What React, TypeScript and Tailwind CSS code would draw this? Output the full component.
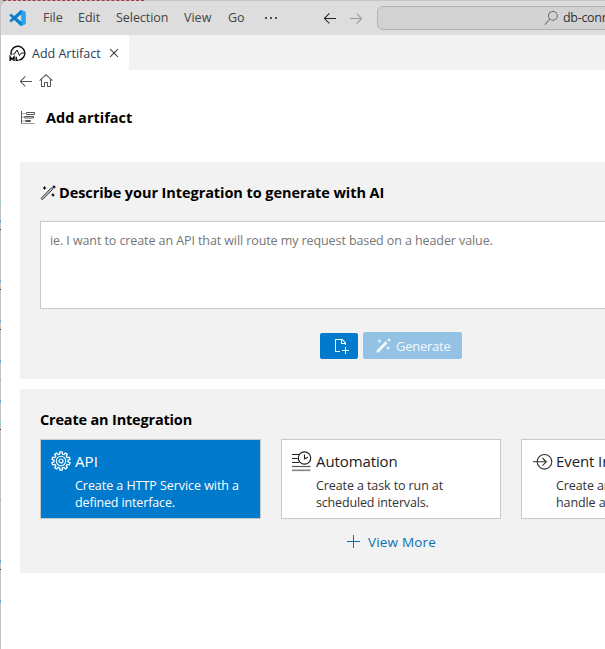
import React from "react";
import {
  VscArrowLeft,
  VscArrowRight,
  VscHome,
  VscSearch,
  VscEllipsis,
  VscClose,
  VscNewFile,
  VscAdd,
} from "react-icons/vsc";

function VsCodeLogo() {
  return (
    <svg className="shrink-0" width="17" height="16" viewBox="0 0 24 24">
      <path
        fill="#0b7fcf"
        d="M23.15 2.587L18.21.21a1.494 1.494 0 0 0-1.705.29l-9.46 8.63-4.12-3.128a.999.999 0 0 0-1.276.057L.327 7.261A1 1 0 0 0 .326 8.74L3.899 12 .326 15.26a1 1 0 0 0 .001 1.479L1.65 17.94a.999.999 0 0 0 1.276.057l4.12-3.128 9.46 8.63a1.492 1.492 0 0 0 1.704.29l4.942-2.377A1.5 1.5 0 0 0 24 20.06V3.939a1.5 1.5 0 0 0-.85-1.352zm-5.146 14.861L10.826 12l7.178-5.448v10.896z"
      />
      <path
        fill="#27a5f2"
        d="M18.21.21l4.94 2.377A1.5 1.5 0 0 1 24 3.939V20.06a1.5 1.5 0 0 1-.85 1.352L18.21 23.79a1.49 1.49 0 0 1-1.2.05c.6.1 1-.5 1-1.1V1.3c0-.6-.4-1.2-1-1.14a1.49 1.49 0 0 1 1.2.05z"
      />
    </svg>
  );
}

function MiLogo() {
  return (
    <svg className="shrink-0" width="17" height="17" viewBox="0 0 17 17" fill="none" stroke="#111">
      <path d="M2.3 10.200A6.900 6.900 0 1 1 10.200 15" strokeWidth="1.400" />
      <path d="M3.500 9h2L8 5l2.500 5.500L12.500 8H15" strokeWidth="1" />
      <path d="M1.200 16v-4l1.900 2.400L5 12v4M7.200 11.800v3.500h2.300" strokeWidth="1.500" />
    </svg>
  );
}

function ArtifactIcon() {
  return (
    <svg width="16" height="15" viewBox="0 0 16 15" fill="none" stroke="#555" strokeWidth="1">
      <path d="M1.500 1v12.500" />
      <path d="M1.500 13.500h13" stroke="#999" />
      <path d="M6.500 2.500h8v2h-8z" />
      <path d="M4.500 6.500h9v1.500h-9z" />
      <path d="M5.500 10.500h5v1h-5z" />
      <path d="M2 3.500h4.500M2 7.200h2.500M2 11h3.500" stroke="#aaa" />
    </svg>
  );
}

function Wand({ solid = false }: { solid?: boolean }) {
  return (
    <svg width="16" height="16" viewBox="0 0 16 16" fill="none" stroke="currentColor">
      {solid ? (
        <path d="M2.800 13.200L10.800 5" strokeWidth="2.800" strokeLinecap="round" />
      ) : (
        <path
          d="M1.600 12.700L10.800 3.300a1 1 0 0 1 1.500 1.400L3 14.200a1 1 0 0 1-1.400-1.500z"
          fill="#bbb"
          stroke="#444"
          strokeWidth="1"
        />
      )}
      <path
        fill="currentColor"
        stroke="none"
        d="M4.500 1l.7 1.300 1.300.7-1.300.7L4.500 5l-.7-1.300L2.500 3l1.300-.7zM14 0l.7 1.300 1.300.7-1.300.7L14 4l-.7-1.300L12 2l1.300-.7zM13 8l.7 1.300 1.300.7-1.300.7L13 12l-.7-1.300L11 10l1.300-.7z"
      />
    </svg>
  );
}

// Outline of a cog with flat teeth.
function cogPath(teeth: number, inner: number, outer: number) {
  const points: string[] = [];
  const step = (Math.PI * 2) / teeth;
  for (let i = 0; i < teeth; i++) {
    const a = i * step - Math.PI / 2;
    const corners: [number, number][] = [
      [-0.3, inner],
      [-0.2, outer],
      [0.2, outer],
      [0.3, inner],
    ];
    for (const [offset, radius] of corners) {
      const t = a + offset * step;
      points.push(`${(10 + radius * Math.cos(t)).toFixed(2)} ${(10 + radius * Math.sin(t)).toFixed(2)}`);
    }
  }
  return `M${points.join("L")}Z`;
}

function CogIcon() {
  return (
    <svg width="20" height="20" viewBox="0 0 20 20" fill="none" stroke="white" strokeLinejoin="round">
      <path d={cogPath(10, 7.1, 9.2)} strokeWidth="1.300" />
      <circle cx="10" cy="10" r="4.700" strokeWidth="1.100" />
      <circle cx="10" cy="10" r="2" strokeWidth="1.200" />
    </svg>
  );
}

function ScheduleIcon() {
  return (
    <svg className="-ml-px" width="21" height="21" viewBox="0 0 21 21" fill="none" stroke="#222">
      <path d="M1 3.500h7M1 7.500h5.500M1 11.500h7" strokeWidth="1.200" />
      <path d="M1 15.500h18.500" stroke="#555" strokeWidth="1.200" />
      <path d="M1 19.300h18.500" stroke="#888" strokeWidth="1.700" />
      <circle cx="13.500" cy="7" r="6.200" strokeWidth="1.200" />
      <path d="M13.500 3.500v4.300L17 6.300" strokeWidth="1.100" />
    </svg>
  );
}

function EventIcon() {
  return (
    <svg width="21" height="20" viewBox="0 0 21 20" fill="none" stroke="#333">
      <circle cx="12.500" cy="10.800" r="7.300" strokeWidth="1.100" />
      <path d="M1 10.800h12.500M10.500 7l3.800 3.800-3.800 3.800" strokeWidth="1.100" />
    </svg>
  );
}

type CardProps = {
  icon: React.ReactNode;
  title: string;
  titleClass?: string;
  lines: { text: string; className: string }[];
  active?: boolean;
};

function Card({ icon, title, titleClass = "", lines, active }: CardProps) {
  return (
    <div
      className={`h-20 shrink-0 border border-[#c8c8c8] pt-[10px] pl-[10px] whitespace-nowrap ${
        active ? "w-[221px] bg-[#007acc] text-white" : "w-[220px] bg-white text-[#1c1c1c]"
      }`}
    >
      <div className="flex h-[22px] items-center">
        <span className="w-6 shrink-0">{icon}</span>
        <span className={`text-[15px] leading-[22px] ${titleClass}`}>{title}</span>
      </div>
      <div className={`pt-[5px] pl-6 text-[12.5px] leading-[17px] ${active ? "" : "text-[#333]"}`}>
        {lines.map((l) => (
          <div key={l.text} className={l.className}>
            {l.text}
          </div>
        ))}
      </div>
    </div>
  );
}

// Slivers of the editor behind the window: top offset, height, colour.
const edgeMarks = [
  { at: "top-[119px]", look: "h-[2px] bg-[#9fc4dd]" },
  { at: "top-[200px]", look: "h-[6px] bg-[#9ccaca]" },
  { at: "top-[220px]", look: "h-[3px] bg-[#6fa5cf]" },
  { at: "top-[229px]", look: "h-px bg-[#3a2a8c]" },
  { at: "top-[280px]", look: "h-[2px] bg-[#6fa5cf]" },
  { at: "top-[289px]", look: "h-px bg-[#3a2a8c]" },
  { at: "top-[320px]", look: "h-[2px] bg-[#6fa5cf]" },
  { at: "top-[329px]", look: "h-px bg-[#3a2a8c]" },
  { at: "top-[360px]", look: "h-[3px] bg-[#6fa5cf]" },
  { at: "top-[379px]", look: "h-px bg-[#6fa5cf]" },
  { at: "top-[400px]", look: "h-[3px] bg-[#6fa5cf]" },
  { at: "top-[420px]", look: "h-[6px] bg-[#9ccaca]" },
  { at: "top-[429px]", look: "h-px bg-[#333]" },
  { at: "top-[499px]", look: "h-px bg-[#6fa5cf]" },
  { at: "top-[560px]", look: "h-[3px] bg-[#6fa5cf]" },
  { at: "top-[569px]", look: "h-px bg-[#3a2a8c]" },
  { at: "top-[600px]", look: "h-[3px] bg-[#6fa5cf]" },
];

function TitleBar() {
  return (
    <div className="flex h-[34px] shrink-0 items-center bg-[#dddddd] pl-[8px] text-[12.5px] whitespace-nowrap text-[#444]">
      <VsCodeLogo />
      <span className="ml-[17px] w-[35px] shrink-0">File</span>
      <span className="w-[38px] shrink-0">Edit</span>
      <span className="w-[68px] shrink-0 tracking-[-0.05px]">Selection</span>
      <span className="w-[44px] shrink-0">View</span>
      <span className="w-[35px] shrink-0">Go</span>
      <VscEllipsis className="size-4 shrink-0 text-[#222]" />
      <VscArrowLeft className="ml-[43px] size-4 shrink-0 text-[#222]" />
      <VscArrowRight className="ml-[10px] size-4 shrink-0 text-[#999]" />
      <div className="ml-[13px] flex h-6 w-[400px] shrink-0 items-center rounded-md border border-[#b3b3b3] bg-[#d2d2d2] pl-[166px] text-[#333]">
        <VscSearch className="size-[14px] shrink-0 text-[#666]" />
        <span className="ml-[5px] tracking-[-0.300px]">db-conn</span>
      </div>
    </div>
  );
}

export default function App() {
  return (
    <div className="relative h-[649px] w-[605px] overflow-hidden bg-[#c4c4c4] pt-px pl-px font-['Open_Sans','Noto_Sans',sans-serif]">
      <div className="absolute top-0 left-[3px] h-px w-[141px] border-t border-dashed border-[#a03a45]" />
      {edgeMarks.map((m) => (
        <div key={m.at} className={`absolute left-0 w-px ${m.at} ${m.look}`} />
      ))}
      <div className="flex h-full w-full flex-col overflow-hidden rounded-tl-lg bg-white">
        <TitleBar />

        <div className="flex h-[35px] shrink-0 bg-[#f2f2f2]">
          <div className="flex w-32 items-center bg-white pt-px pl-2 text-[12.5px] whitespace-nowrap text-[#2b3a55]">
            <MiLogo />
            <span className="ml-[6px] w-[74px] shrink-0 pt-[2px]">Add Artifact</span>
            <VscClose className="size-4 shrink-0 text-[#333]" />
          </div>
        </div>

        <div className="flex h-[22px] shrink-0 items-center gap-1 pl-[17px] text-[#555]">
          <VscArrowLeft className="size-4" />
          <VscHome className="size-4" />
        </div>

        <div className="flex h-[50px] shrink-0 items-center pl-[19px]">
          <ArtifactIcon />
          <h1 className="ml-[10px] pt-px text-[14.500px] font-bold text-black">Add artifact</h1>
        </div>

        <div className="mt-[20px] ml-[19px] h-[217px] shrink-0 bg-[#f2f2f2] pl-5">
          <div className="flex h-[59px] items-center pt-[2px]">
            <Wand />
            <h2 className="ml-[3px] text-[14.500px] font-bold tracking-[-0.07px] whitespace-nowrap text-black">
              Describe your Integration to generate with AI
            </h2>
          </div>
          <div className="h-[88px] w-[600px] border border-[#c8c8c8] bg-white px-[9px] pt-[10px] text-[12.500px] leading-[17px] tracking-[-0.09px] text-[#767676]">
            ie. I want to create an API that will route my request based on a header value.
          </div>
          <div className="mt-[23px] flex items-end gap-[5px] pl-[280px]">
            <button className="flex h-[26px] w-[38px] items-center justify-center rounded-[2px] bg-[#007acc] pl-1 text-white">
              <VscNewFile className="size-4" />
            </button>
            <button className="flex h-[27px] w-[99px] items-center rounded-[2px] bg-[#93c2e4] pl-3 text-[13px] tracking-[-0.25px] text-[#f3f8fc]">
              <Wand solid />
              <span className="ml-[5px] pt-[2px]">Generate</span>
            </button>
          </div>
        </div>

        <div className="mt-[10px] ml-[19px] h-[184px] shrink-0 bg-[#f2f2f2] pl-5">
          <h2 className="flex h-[50px] items-center pt-[11px] text-[14.500px] font-bold tracking-[-0.18px] text-black">
            Create an Integration
          </h2>
          <div className="flex">
            <Card
              active
              icon={<CogIcon />}
              title="API"
              titleClass="tracking-[0.1px]"
              lines={[
                { text: "Create a HTTP Service with a", className: "tracking-[-0.05px]" },
                { text: "defined interface.", className: "tracking-[-0.14px]" },
              ]}
            />
            <div className="w-5 shrink-0" />
            <Card
              icon={<ScheduleIcon />}
              title="Automation"
              titleClass="tracking-[-0.1px]"
              lines={[
                { text: "Create a task to run at", className: "tracking-[-0.1px]" },
                { text: "scheduled intervals.", className: "tracking-[-0.17px]" },
              ]}
            />
            <div className="w-5 shrink-0" />
            <Card
              icon={<EventIcon />}
              title="Event In"
              titleClass="tracking-[-0.1px]"
              lines={[
                { text: "Create an", className: "tracking-[-0.1px]" },
                { text: "handle a", className: "tracking-[-0.1px]" },
              ]}
            />
          </div>
          <div className="mt-[13px] flex items-center pl-[306px] text-[13.500px] tracking-[0.18px] text-[#0e70b0]">
            <VscAdd className="-mt-px size-4" />
            <span className="ml-[6px]">View More</span>
          </div>
        </div>
      </div>
    </div>
  );
}
